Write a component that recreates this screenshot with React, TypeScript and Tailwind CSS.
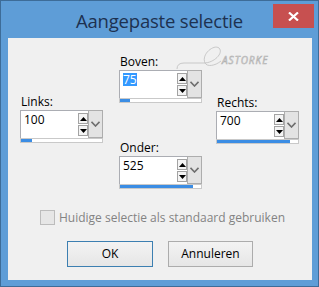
import type { ReactNode } from "react";

function Triangle({ up }: { up?: boolean }) {
    return (
        <svg width="7" height="4" viewBox="0 0 7 4">
            {up ? <path d="M0 4 L3.5 0 L7 4 Z" fill="#000" /> : <path d="M0 0 L3.5 4 L7 0 Z" fill="#000" />}
        </svg>
    )
}

function SpinField({ label, value, fill, selected }: { label: string; value: string; fill: number; selected?: boolean }) {
    return (
        <div className="flex flex-col w-[83px]">
            <div className="h-[15px] leading-[15px] text-[12px] text-black mb-[1px] pl-[1px]">{label}</div>
            <div className="flex flex-col h-[33px]">
                <div className="flex h-[28px]">
                    <div className="flex w-[68px] bg-white border border-[#abadb3] border-r-0 border-b-0">
                        <div className="flex-1 pl-[3px] pt-[2px] text-[12px] leading-[13px]">
                            <span className={selected ? "inline-block h-[13px] bg-[#3399ff] text-white" : "inline-block h-[13px] text-black"}>{value}</span>
                        </div>
                        <div className="flex flex-col justify-center gap-[1px] w-[10px]">
                            <div className="h-[11px] border border-[#a3a3a3] bg-[#f4f4f4] flex items-center justify-center"><Triangle up /></div>
                            <div className="h-[11px] border border-[#a3a3a3] bg-[#f4f4f4] flex items-center justify-center"><Triangle /></div>
                        </div>
                    </div>
                    <div className="w-[15px] bg-[#e3e3e3] border border-[#adadad] flex items-center justify-center">
                        <svg width="9" height="6" viewBox="0 0 9 6">
                            <path d="M0.5 0.8 L4.5 5 L8.5 0.8" fill="none" stroke="#6e6e6e" strokeWidth="1.6" />
                        </svg>
                    </div>
                </div>
                <div className="h-[5px] border border-[#c9c9c9] bg-white">
                    <div className="h-full bg-[#3b8de4]" style={{ width: fill }} />
                </div>
            </div>
        </div>
    )
}

function Button({ children, primary, width }: { children: ReactNode; primary?: boolean; width: string }) {
    return (
        <div
            className={
                primary
                    ? "h-[26px] flex items-center justify-center text-[12px] text-black border border-[#3c7fb1] bg-gradient-to-b from-[#f3f3f3] to-[#e6e6e6] " + width
                    : "h-[26px] flex items-center justify-center text-[12px] text-black border border-[#acacac] bg-gradient-to-b from-[#f3f3f3] to-[#e6e6e6] " + width
            }
        >
            {children}
        </div>
    )
}

export default function App() {
    return (
        <div className="w-[319px] h-[287px] flex flex-col bg-[#5e9dd7] border border-[#3d6c98] font-['Open_Sans',sans-serif]">
            <div className="h-[37px] grid grid-cols-[1fr_auto_1fr]">
                <div />
                <div className="text-[18.5px] leading-[37px] tracking-[-0.2px] text-[#1d3150] pt-[1px]">Aangepaste selectie</div>
                <div className="flex justify-end pr-[4px] pt-[3px]">
                    <div className="w-[41px] h-[24px] bg-[#c75050] flex items-center justify-center">
                        <svg width="11" height="9" viewBox="0 0 11 9">
                            <path d="M1 0.5 L10 8.5 M10 0.5 L1 8.5" stroke="#fff" strokeWidth="2.2" />
                        </svg>
                    </div>
                </div>
            </div>
            <div className="relative flex-1 ml-[7px] mr-[6px] mb-[6px] bg-[#f0f0f0] flex flex-col">
                <svg className="absolute left-[166px] top-[6px]" width="60" height="30" viewBox="166 6 60 30">
                    <path
                        d="M169 31 Q169 25 176 25 L196 25 C206 25 216 15 211 10 C206 6 193 16 197 25 C199 29 207 28 213 23"
                        fill="none"
                        stroke="#c3c3c3"
                        strokeWidth="0.9"
                    />
                </svg>
                <div className="absolute left-[214px] top-[16px] text-[10px] leading-[12px] tracking-[1px] text-transparent [-webkit-text-stroke:0.6px_#b2b2b2] italic">
                    ASTORKE
                </div>

                <div className="flex pl-[12px]">
                    <div className="pt-[56px]">
                        <SpinField label="Links:" value="100" fill={11} />
                    </div>
                    <div className="pt-[16px] ml-[16px] flex flex-col gap-[37px]">
                        <SpinField label="Boven:" value="75" fill={10} selected />
                        <SpinField label="Onder:" value="525" fill={73} />
                    </div>
                    <div className="pt-[57px] ml-[14px]">
                        <SpinField label="Rechts:" value="700" fill={73} />
                    </div>
                </div>

                <div className="flex items-center ml-[32px] mt-[21px] gap-[4px]">
                    <div className="w-[15px] h-[15px] border border-[#bcbcbc] bg-[#e6e6e6]" />
                    <div className="text-[12px] leading-[15px] text-[#838383]">Huidige selectie als standaard gebruiken</div>
                </div>

                <div className="flex justify-center gap-[15px] mt-[16px]">
                    <Button primary width="w-[86px]">OK</Button>
                    <Button width="w-[85px]">Annuleren</Button>
                </div>
            </div>
        </div>
    )
}
